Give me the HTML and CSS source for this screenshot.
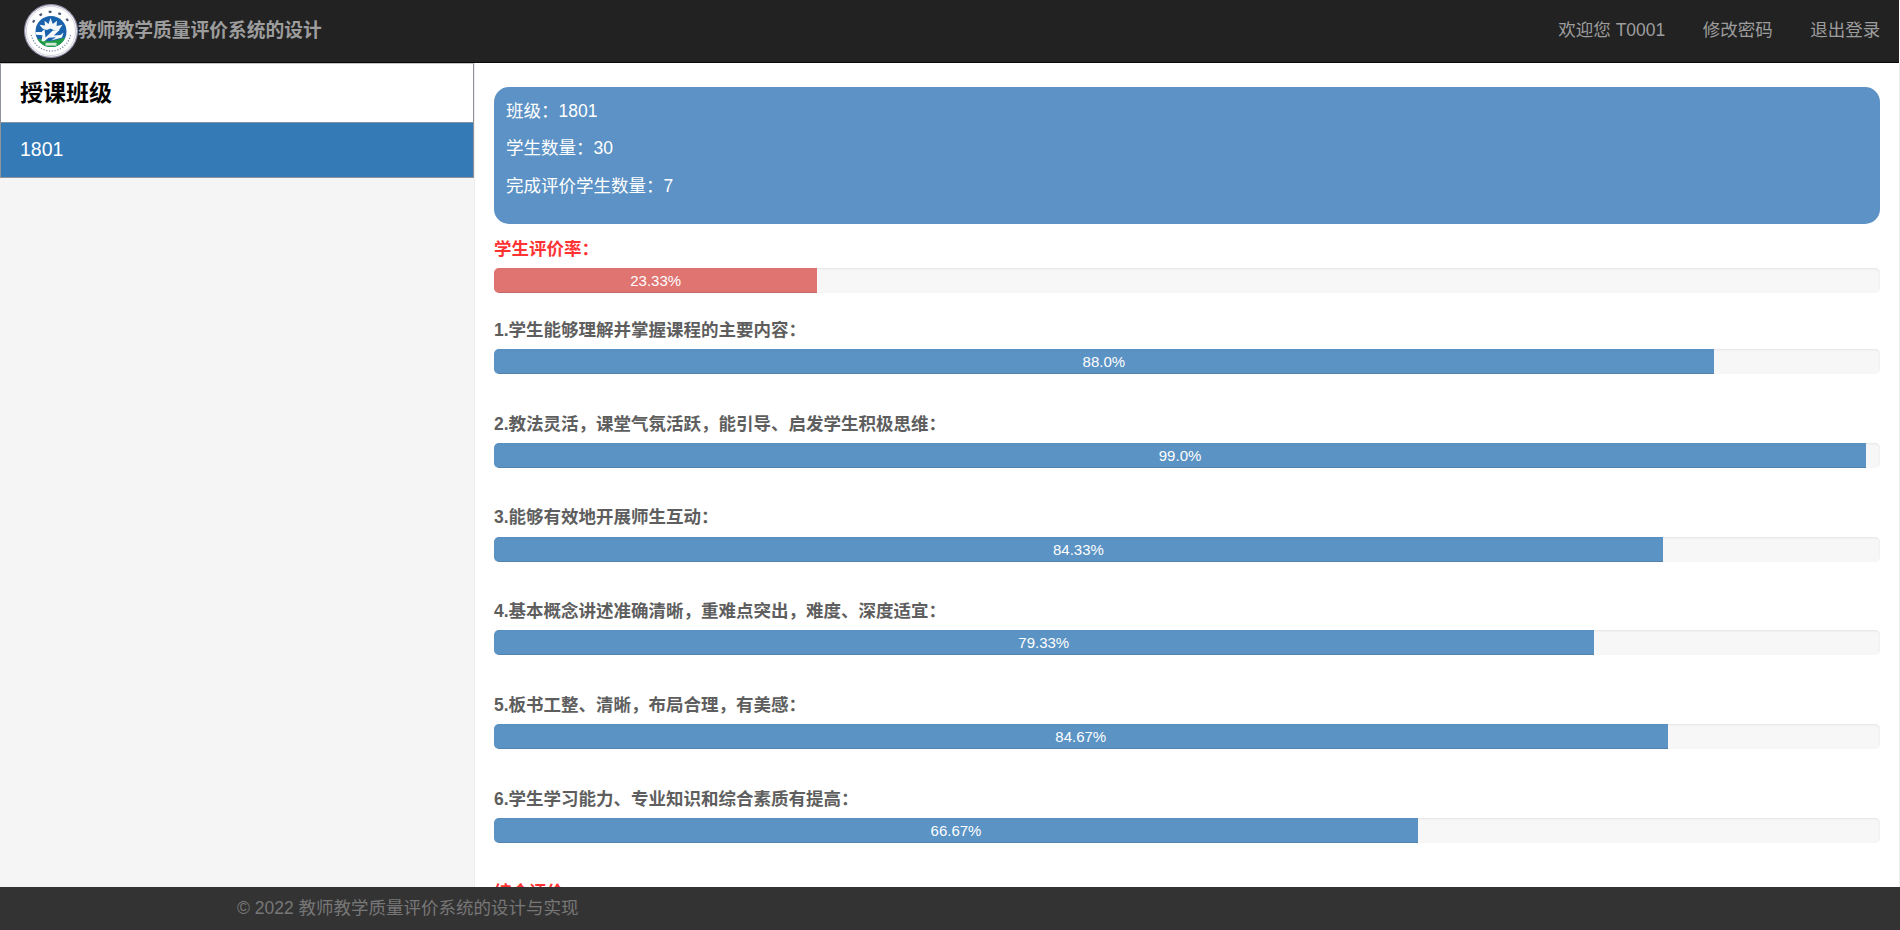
FILE: index.html
```html
<!DOCTYPE html>
<html lang="zh-CN">
<head>
<meta charset="utf-8">
<title>教师教学质量评价系统的设计</title>
<link rel="stylesheet" href="styles.css">
</head>
<body>
<header class="navbar">
  <div class="brand">
    <svg class="logo" viewBox="0 0 54 54" aria-hidden="true">
      <defs>
        <clipPath id="inner"><circle cx="27" cy="27.5" r="15.5"/></clipPath>
      </defs>
      <circle cx="27" cy="27" r="26.4" fill="#fff" stroke="#8f8da6" stroke-width="1.2"/>
      <circle cx="27" cy="27" r="24.6" fill="none" stroke="#b4b3c4" stroke-width=".6"/>
      <path d="M9 18.500A20.500 20.500 0 0 1 45 18.500" fill="none" stroke="#4a566e" stroke-width="2.200" stroke-dasharray="2.800 7"/>
      <path d="M7.400 31A20 20 0 0 0 46.600 31" fill="none" stroke="#77839a" stroke-width="1.200" stroke-dasharray="1.200 1.600"/>
      <g clip-path="url(#inner)">
        <rect x="10" y="11" width="34" height="34" fill="#1a62ac"/>
        <path d="M10 35C16 33.500 21 37.500 27 37C33 36.500 38 33.500 44 33.500V45H10Z" fill="#1f9a45"/>
        <path d="M26.500 14L28.800 20L33 16.800L32.600 22L38.500 20.800L35 26L30.500 26.500L26.500 24.500L22.800 26L18.500 24.500L15.500 20.800L21 21.500L20.500 16.800L24.500 20Z" fill="#f4f8fb"/>
        <path d="M11.500 28L17.500 28L20.500 25L21.500 33.500L28.500 26.800L36 25.500L29.800 31.500L36.500 31L39.500 28.500L38 33.500L27 36.500L32 33.200L24.500 33.800L20 37.500L17.500 37L18.500 31.300L12 30.800Z" fill="#f4f8fb"/>
        <rect x="21.500" y="38.800" width="11" height="2.800" fill="#cfe9d4"/>
      </g>
    </svg>
    <span class="brand-name">教师教学质量评价系统的设计</span>
  </div>
  <nav class="nav-links">
    <a class="nav-link" href="#">欢迎您 T0001</a>
    <a class="nav-link" href="#">修改密码</a>
    <a class="nav-link" href="#">退出登录</a>
  </nav>
</header>

<div class="layout">
  <aside class="sidebar">
    <div class="panel">
      <h3 class="panel-title">授课班级</h3>
      <a class="class-item" href="#">1801</a>
    </div>
  </aside>

  <main class="content">
    <section class="summary">
      <p>班级：1801</p>
      <p>学生数量：30</p>
      <p>完成评价学生数量：7</p>
    </section>

    <section class="rate">
      <div class="label label-red">学生评价率：</div>
      <div class="progress"><div class="bar bar-red" style="width:23.33%">23.33%</div></div>
    </section>

    <section class="item">
      <div class="label">1.学生能够理解并掌握课程的主要内容：</div>
      <div class="progress"><div class="bar" style="width:88%">88.0%</div></div>
    </section>
    <section class="item">
      <div class="label">2.教法灵活，课堂气氛活跃，能引导、启发学生积极思维：</div>
      <div class="progress"><div class="bar" style="width:99%">99.0%</div></div>
    </section>
    <section class="item">
      <div class="label">3.能够有效地开展师生互动：</div>
      <div class="progress"><div class="bar" style="width:84.33%">84.33%</div></div>
    </section>
    <section class="item">
      <div class="label">4.基本概念讲述准确清晰，重难点突出，难度、深度适宜：</div>
      <div class="progress"><div class="bar" style="width:79.33%">79.33%</div></div>
    </section>
    <section class="item">
      <div class="label">5.板书工整、清晰，布局合理，有美感：</div>
      <div class="progress"><div class="bar" style="width:84.67%">84.67%</div></div>
    </section>
    <section class="item">
      <div class="label">6.学生学习能力、专业知识和综合素质有提高：</div>
      <div class="progress"><div class="bar" style="width:66.67%">66.67%</div></div>
    </section>
    <div class="label label-red">综合评价</div>
  </main>
</div>

<footer class="footer">© 2022 教师教学质量评价系统的设计与实现</footer>
</body>
</html>
```
FILE: styles.css
```css
* { box-sizing: border-box; }

html, body { height: 100%; }

body {
  margin: 0;
  display: flex;
  flex-direction: column;
  height: 100vh;
  overflow: hidden;
  background: #fff;
  color: #333;
  font-family: "Liberation Sans", "Noto Sans CJK SC", sans-serif;
  font-size: 17.5px;
  line-height: 25px;
}

a { text-decoration: none; }

.navbar {
  flex: none;
  display: flex;
  justify-content: space-between;
  align-items: center;
  height: 63px;
  margin-right: 1px;
  background: #222;
  border-bottom: 1px solid #080808;
}

.brand {
  display: flex;
  align-items: center;
  padding-left: 24px;
}

.logo {
  display: block;
  width: 54px;
  height: 54px;
}

.brand-name {
  padding-bottom: 2px;
  color: #9d9d9d;
  font-size: 18.75px;
  font-weight: 700;
}

.nav-links {
  display: flex;
  padding-bottom: 2px;
}

.nav-link {
  padding: 0 18.75px;
  color: #9d9d9d;
}

.layout {
  flex: 1;
  display: flex;
  min-height: 0;
}

.sidebar {
  flex: none;
  width: 475px;
  background: #f5f5f5;
  border-right: 1px solid #eee;
}

.panel {
  border: 1px solid #8f949b;
  border-top-color: #c4c4c4;
}

.panel-title {
  margin: 0;
  padding: 1px 19px 0;
  height: 58px;
  background: #fff;
  color: #000;
  font-size: 23px;
  font-weight: 700;
  line-height: 57px;
}

.class-item {
  display: block;
  height: 55px;
  padding: 0 19px;
  background: #337ab7;
  border-top: 1px solid #8093a5;
  color: #fff;
  font-size: 19.5px;
  line-height: 53px;
}

.content {
  flex: 1;
  min-width: 0;
  overflow: hidden;
  padding: 24px 19px 0;
  border-right: 1px solid #eee;
}

.summary {
  height: 136.5px;
  margin-bottom: 13px;
  padding: 11.5px 12px;
  background: #5c92c5;
  border-radius: 15px;
  color: #fff;
}

.summary p { margin: 0 0 12.5px; }

.label {
  margin-bottom: 6.25px;
  color: #5e5e5e;
  font-weight: 700;
}

.label-red { color: #f33; }

.rate { margin-bottom: 25px; }

.item { margin-bottom: 37.5px; }

.progress {
  height: 25px;
  overflow: hidden;
  background: #f7f7f7;
  border-radius: 5px;
  box-shadow: inset 0 1px 2px rgba(0, 0, 0, .08);
}

.bar {
  height: 100%;
  background: #337ab7;
  opacity: .8;
  box-shadow: inset 0 -1px 0 rgba(0, 0, 0, .15);
  color: #fff;
  font-size: 15px;
  line-height: 25px;
  text-align: center;
}

.bar-red { background: #d9534f; }

.footer {
  position: fixed;
  left: 0;
  right: 0;
  bottom: 0;
  height: 43px;
  padding: 9px 237px;
  background: #333;
  color: #777;
}
```
